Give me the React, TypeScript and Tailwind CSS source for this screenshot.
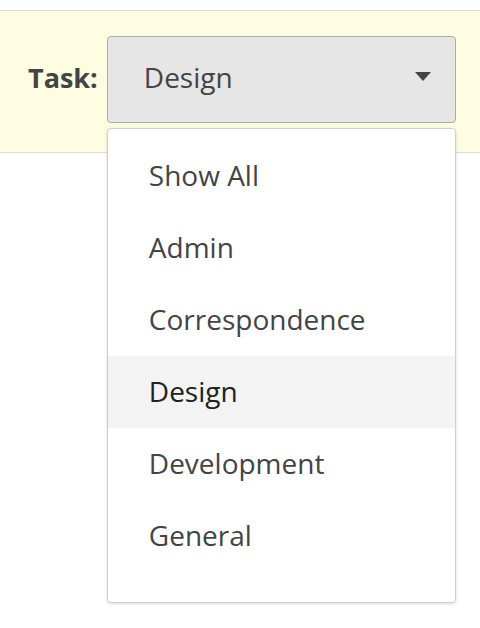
import { useState } from "react";

const tasks = [
  "Show All",
  "Admin",
  "Correspondence",
  "Design",
  "Development",
  "General",
];

export default function App() {
  const [selected] = useState("Design");

  return (
    <div
      className="min-h-[628px] bg-white pt-[10px] text-[#444]"
      style={{ fontFamily: '"Open Sans", sans-serif' }}
    >
      <div className="flex h-[143px] items-start border-y border-[#dcdcdc] bg-[#fefde2] pt-[25px]">
        <label className="ml-[28px] mt-[24px] text-[27px] leading-[36px] font-bold text-[#444]">
          Task:
        </label>
        <div className="relative ml-[9px]">
          <button className="flex h-[87px] w-[349px] items-center justify-between rounded-[4px] border border-[#ababab] bg-[#e6e6e6] pr-[24px] pl-[36px] pb-[6px] text-[28px] text-[#444]">
            <span>{selected}</span>
            <svg width="16" height="9" viewBox="0 0 16 9" aria-hidden="true">
              <path d="M0 0h16L8 9z" fill="#444" />
            </svg>
          </button>
          <ul className="absolute top-full left-0 z-10 mt-[5px] w-[349px] rounded-[4px] border border-[#cfcfcf] bg-white pt-[11px] pb-[30px] shadow-[0_1px_3px_rgba(0,0,0,0.15)]">
            {tasks.map((task) => (
              <li
                key={task}
                className={[
                  "flex h-[72px] items-center pb-[2px] pl-[41px] text-[28px]",
                  task === selected
                    ? "bg-[#f3f3f3] text-[#222]"
                    : "text-[#444]",
                ].join(" ")}
              >
                {task}
              </li>
            ))}
          </ul>
        </div>
      </div>
    </div>
  );
}
